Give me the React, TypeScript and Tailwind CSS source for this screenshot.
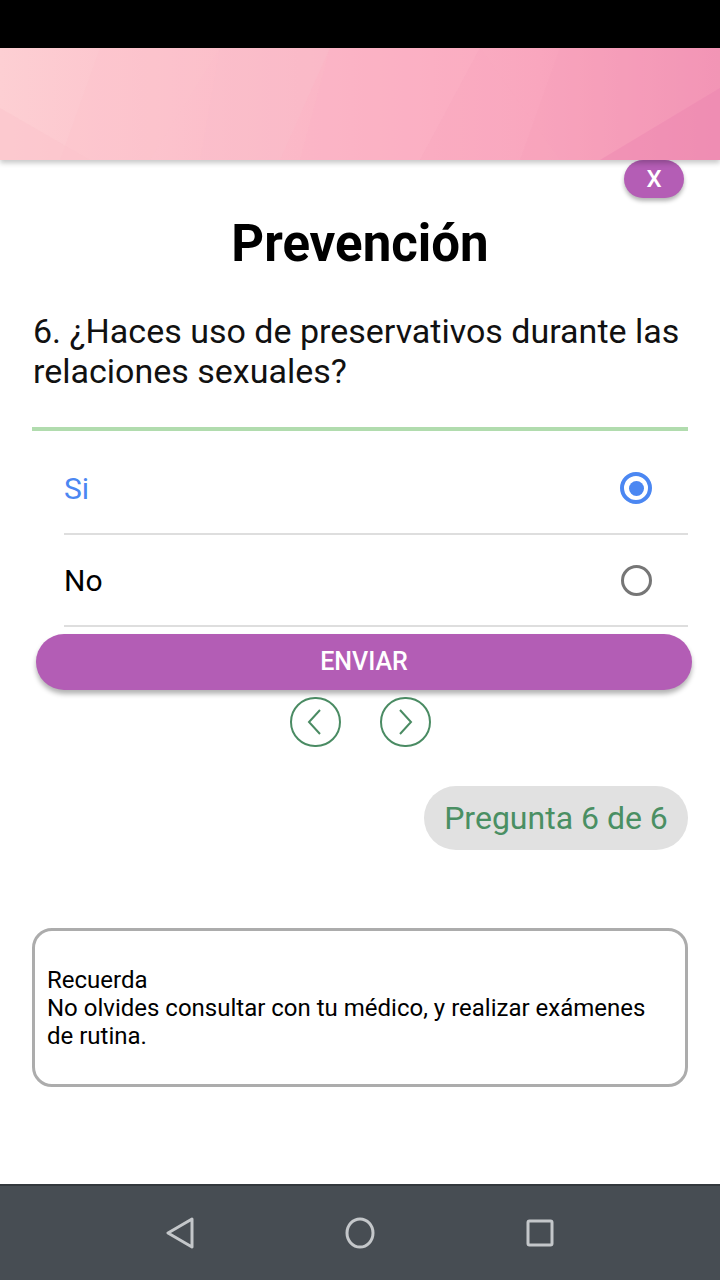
import { useState } from "react";

const font = { fontFamily: "Roboto, 'Noto Sans', sans-serif" };

type Option = { id: string; label: string };

const options: Option[] = [
  { id: "si", label: "Si" },
  { id: "no", label: "No" },
];

function HeaderArt() {
  return (
    <svg className="absolute inset-0 h-full w-full" viewBox="0 0 720 112" preserveAspectRatio="none">
      <defs>
        <linearGradient id="pink" x1="0" y1="0" x2="1" y2="0">
          <stop offset="0" stopColor="#fdcfd3" />
          <stop offset="0.45" stopColor="#fbb6c6" />
          <stop offset="0.75" stopColor="#f9a6be" />
          <stop offset="1" stopColor="#f08fb3" />
        </linearGradient>
      </defs>
      <rect width="720" height="112" fill="url(#pink)" />
      <polygon points="0,112 0,60 90,112" fill="#fcc4cb" opacity="0.5" />
      <polygon points="100,0 220,0 150,112 60,112" fill="#fdc3cc" opacity="0.35" />
      <polygon points="220,0 330,0 280,112 200,112" fill="#fbbecb" opacity="0.4" />
      <polygon points="330,0 480,0 420,112 300,112" fill="#fbb2c5" opacity="0.35" />
      <polygon points="480,0 560,112 420,112" fill="#f9aac0" opacity="0.35" />
      <polygon points="560,0 720,0 720,40 600,112 520,112" fill="#f7a0bb" opacity="0.35" />
      <polygon points="720,40 720,112 600,112" fill="#ef8cb2" opacity="0.6" />
    </svg>
  );
}

function Radio({ checked }: { checked: boolean }) {
  if (checked) {
    return (
      <span className="flex h-[32px] w-[32px] items-center justify-center rounded-full border-[4px] border-[#4b87f2]">
        <span className="h-[15px] w-[15px] rounded-full bg-[#4b87f2]" />
      </span>
    );
  }
  return <span className="block h-[31px] w-[31px] rounded-full border-[3px] border-[#767676]" />;
}

function NavCircle({ dir }: { dir: "left" | "right" }) {
  return (
    <button
      type="button"
      className="flex h-[50px] w-[51px] items-center justify-center rounded-full border-2 border-[#4a8b63]"
    >
      <svg width="20" height="28" viewBox="0 0 20 28" fill="none" stroke="#4a8b63" strokeWidth="2">
        {dir === "left" ? <path d="M15 2 L4 14 L15 26" /> : <path d="M5 2 L16 14 L5 26" />}
      </svg>
    </button>
  );
}

export default function App() {
  const [answer, setAnswer] = useState("si");

  return (
    <div className="flex h-[1280px] w-[720px] flex-col bg-white" style={font}>
      <div className="h-[48px] shrink-0 bg-black" />
      <div className="relative h-[112px] shrink-0 overflow-hidden shadow-[0_3px_5px_rgba(0,0,0,0.22)]">
        <HeaderArt />
      </div>

      <div className="flex flex-1 flex-col">
        <div className="flex justify-end pr-[36px]">
          <button
            type="button"
            className="h-[38px] w-[60px] rounded-full bg-[#b45db5] text-[24px] font-medium text-white shadow-[0_3px_4px_rgba(0,0,0,0.3)]"
          >
            X
          </button>
        </div>

        <h1 className="mt-[16px] text-center text-[51px] font-bold leading-[60px] text-black">Prevención</h1>

        <p className="mt-[37px] px-[33px] text-[34px] leading-[40px] text-[#111]">
          6. ¿Haces uso de preservativos durante las relaciones sexuales?
        </p>

        <div className="mx-[32px] mt-[36px] h-[4px] bg-[#b1dcae]" />

        <div className="ml-[64px] mr-[32px] mt-[12px]">
          {options.map((opt) => {
            const checked = answer === opt.id;
            return (
              <button
                key={opt.id}
                type="button"
                onClick={() => setAnswer(opt.id)}
                className="flex h-[92px] w-full items-center justify-between border-b-2 border-[#dedede] pr-[36px] text-left"
              >
                <span className={checked ? "text-[30px] text-[#4b87f2]" : "text-[30px] text-black"}>
                  {opt.label}
                </span>
                <Radio checked={checked} />
              </button>
            );
          })}
        </div>

        <div className="mt-[7px] px-[36px] pr-[28px]">
          <button
            type="button"
            className="h-[56px] w-full rounded-full bg-[#b35db5] text-[25px] font-medium text-white shadow-[0_4px_5px_rgba(0,0,0,0.3)]"
          >
            ENVIAR
          </button>
        </div>

        <div className="mt-[7px] flex justify-center gap-[39px]">
          <NavCircle dir="left" />
          <NavCircle dir="right" />
        </div>

        <div className="mt-[39px] flex justify-end pr-[32px]">
          <span className="flex h-[64px] w-[264px] items-center justify-center rounded-full bg-[#e1e1e1] text-[32px] text-[#4a8f63]">
            Pregunta 6 de 6
          </span>
        </div>

        <div className="mx-[32px] mt-[78px] flex h-[159px] flex-col justify-center rounded-[20px] border-[3px] border-[#acacac] px-[12px] text-[24px] leading-[28px] text-black">
          <p>Recuerda</p>
          <p>No olvides consultar con tu médico, y realizar exámenes de rutina.</p>
        </div>
      </div>

      <nav className="flex h-[96px] shrink-0 items-center justify-center gap-[149px] border-t-2 border-[#33383d] bg-[#474d53]">
        <svg width="30" height="32" viewBox="0 0 30 32" fill="none" stroke="#c4c7ca" strokeWidth="3" strokeLinejoin="round">
          <path d="M27 2 L3 16 L27 30 Z" />
        </svg>
        <svg width="32" height="32" viewBox="0 0 32 32" fill="none" stroke="#c4c7ca" strokeWidth="3">
          <ellipse cx="16" cy="16" rx="13" ry="14" />
        </svg>
        <svg width="30" height="30" viewBox="0 0 30 30" fill="none" stroke="#c4c7ca" strokeWidth="3">
          <rect x="3" y="3" width="24" height="24" rx="1.5" />
        </svg>
      </nav>
    </div>
  );
}
